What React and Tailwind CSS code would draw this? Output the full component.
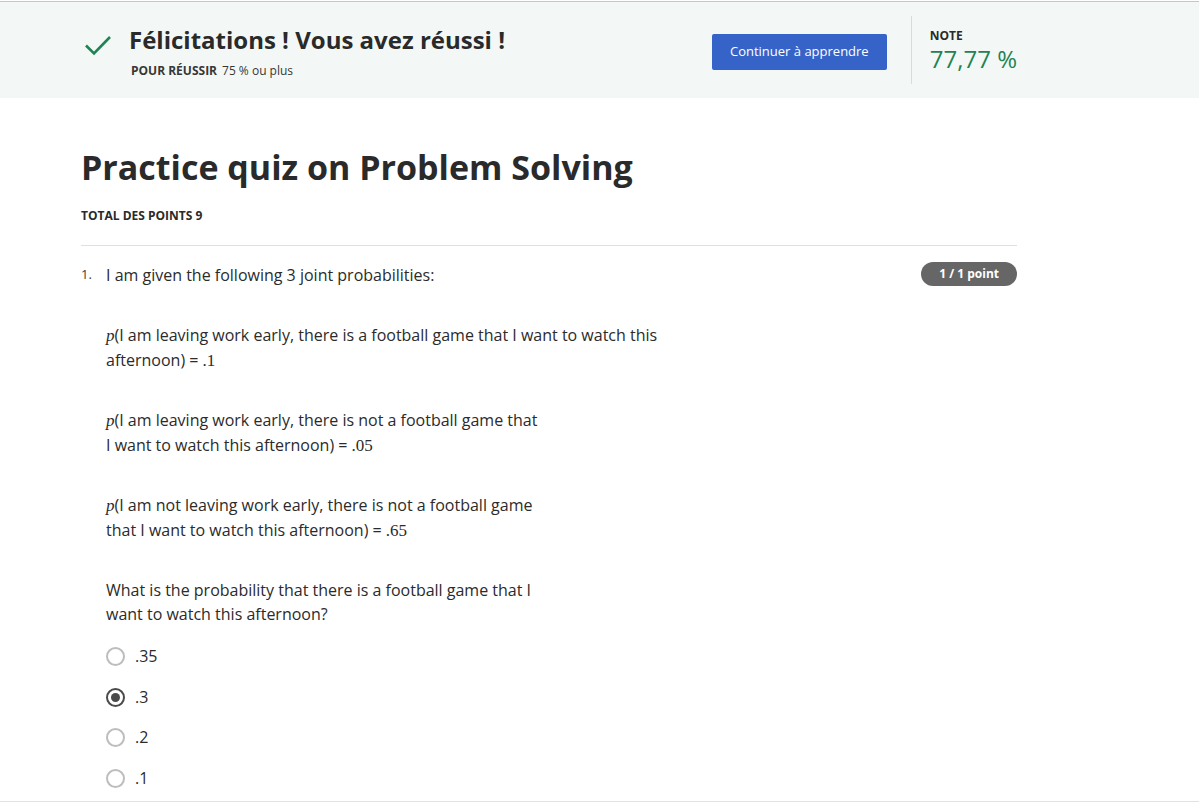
import { useState } from 'react';

const options = ['.35', '.3', '.2', '.1'];

function Check() {
  return (
    <svg width="28" height="22" viewBox="0 0 28 22" fill="none">
      <path d="M2 11.5 L10 19.5 L26 3" stroke="#1f8354" strokeWidth="2.6" />
    </svg>
  );
}

function Radio({ checked }) {
  return (
    <span
      className={`flex h-[19px] w-[19px] items-center justify-center rounded-full border-2 ${
        checked ? 'border-[#4a4a4a]' : 'border-[#bdbdbd]'
      }`}
    >
      {checked && <span className="h-[9px] w-[9px] rounded-full bg-[#4a4a4a]" />}
    </span>
  );
}

const math = "font-['Liberation_Serif',serif] text-[17px]";

export default function App() {
  const [picked, setPicked] = useState(1);

  return (
    <div className="min-h-[803px] bg-white pt-px font-['Open_Sans',sans-serif] text-[#1f1f1f]">
      <div className="border-t border-[#c6c6c6] bg-[#f3f8f6]">
        <div className="flex h-[96px] w-[1017px] pl-[84px]">
          <div className="flex flex-1 pt-[23px]">
            <div className="pt-[9px]">
              <Check />
            </div>
            <div className="ml-[17px]">
              <h2 className="text-[24px] font-bold leading-[30px] text-[#2a2a2a]">
                Félicitations ! Vous avez réussi !
              </h2>
              <p className="mt-[8px] ml-[2px] text-[12px] leading-[16px] text-[#373737]">
                <span className="mr-[5px] font-bold">POUR RÉUSSIR</span>75 % ou plus
              </p>
            </div>
          </div>
          <div className="pt-[32px]">
            <button className="h-[36px] w-[175px] rounded-[2px] bg-[#3563c8] text-[13px] text-white">
              Continuer à apprendre
            </button>
          </div>
          <div className="ml-[24px] mt-[14px] h-[68px] w-px bg-[#d9dcdb]" />
          <div className="ml-[18px] pt-[26px]">
            <div className="text-[12px] font-bold leading-[16px] text-[#2a2a2a]">NOTE</div>
            <div className="mt-[2px] text-[24px] leading-[26px] text-[#1f8354]">77,77 %</div>
          </div>
        </div>
      </div>

      <div className="ml-[81px] w-[936px] pt-[47px]">
        <h1 className="text-[34px] font-bold leading-[44px] text-[#2a2a2a]">
          Practice quiz on Problem Solving
        </h1>
        <p className="mt-[19px] text-[12px] font-bold leading-[16px] text-[#2a2a2a]">
          TOTAL DES POINTS 9
        </p>
        <div className="mt-[21px] h-px bg-[#e0e0e0]" />

        <div className="mt-[16px] flex">
          <span className="w-[25px] pt-[4px] text-[13px] leading-[16px] text-[#3a3a3a]">1.</span>
          <div className="flex-1 text-[16px] leading-[25px] text-[#2b2b2b]">
            <p className="pt-[1px]">I am given the following 3 joint probabilities:</p>

            <p className="mt-[35px]">
              <i className={math}>p</i>(I am leaving work early, there is a football game that I want to watch this
              <br />
              afternoon) = <span className={math}>.1</span>
            </p>
            <p className="mt-[35px]">
              <i className={math}>p</i>(I am leaving work early, there is not a football game that
              <br />I want to watch this afternoon) = <span className={math}>.05</span>
            </p>
            <p className="mt-[35px]">
              <i className={math}>p</i>(I am not leaving work early, there is not a football game
              <br />
              that I want to watch this afternoon) = <span className={math}>.65</span>
            </p>
            <p className="mt-[35px] leading-[24px]">
              What is the probability that there is a football game that I
              <br />
              want to watch this afternoon?
            </p>

            <div className="mt-[18px] flex flex-col gap-[15.7px]">
              {options.map((o, i) => (
                <label
                  key={o}
                  className="flex h-[25px] cursor-pointer items-center gap-[10px]"
                  onClick={() => setPicked(i)}
                >
                  <Radio checked={picked === i} />
                  <span className="text-[16px]">{o}</span>
                </label>
              ))}
            </div>
          </div>
          <span className="h-[24px] rounded-full bg-[#666666] px-[18px] text-[12px] font-bold leading-[24px] text-white">
            1 / 1 point
          </span>
        </div>
      </div>
      <div className="fixed bottom-0 left-0 h-[2px] w-full border-t border-[#e2e2e2] bg-white" />
    </div>
  );
}
